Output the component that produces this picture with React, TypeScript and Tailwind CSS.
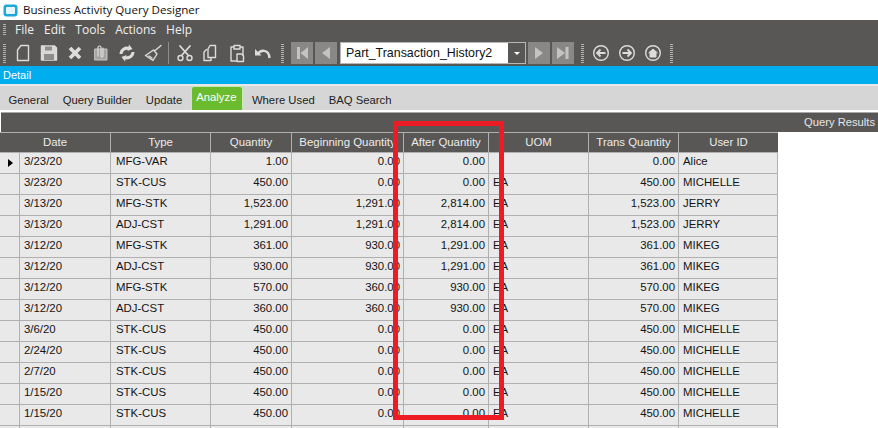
import { ReactNode } from 'react';

const menus = ['File', 'Edit', 'Tools', 'Actions', 'Help'];
const tabs = ['General', 'Query Builder', 'Update', 'Analyze', 'Where Used', 'BAQ Search'];

const rows = [
  ['3/23/20', 'MFG-VAR', '1.00', '0.00', '0.00', '', '0.00', 'Alice'],
  ['3/23/20', 'STK-CUS', '450.00', '0.00', '0.00', 'EA', '450.00', 'MICHELLE'],
  ['3/13/20', 'MFG-STK', '1,523.00', '1,291.00', '2,814.00', 'EA', '1,523.00', 'JERRY'],
  ['3/13/20', 'ADJ-CST', '1,291.00', '1,291.00', '2,814.00', 'EA', '1,523.00', 'JERRY'],
  ['3/12/20', 'MFG-STK', '361.00', '930.00', '1,291.00', 'EA', '361.00', 'MIKEG'],
  ['3/12/20', 'ADJ-CST', '930.00', '930.00', '1,291.00', 'EA', '361.00', 'MIKEG'],
  ['3/12/20', 'MFG-STK', '570.00', '360.00', '930.00', 'EA', '570.00', 'MIKEG'],
  ['3/12/20', 'ADJ-CST', '360.00', '360.00', '930.00', 'EA', '570.00', 'MIKEG'],
  ['3/6/20', 'STK-CUS', '450.00', '0.00', '0.00', 'EA', '450.00', 'MICHELLE'],
  ['2/24/20', 'STK-CUS', '450.00', '0.00', '0.00', 'EA', '450.00', 'MICHELLE'],
  ['2/7/20', 'STK-CUS', '450.00', '0.00', '0.00', 'EA', '450.00', 'MICHELLE'],
  ['1/15/20', 'STK-CUS', '450.00', '0.00', '0.00', 'EA', '450.00', 'MICHELLE'],
  ['1/15/20', 'STK-CUS', '450.00', '0.00', '0.00', 'EA', '450.00', 'MICHELLE'],
  ['', '', '', '', '', '', '', ''],
];

const headers = ['Date', 'Type', 'Quantity', 'Beginning Quantity', 'After Quantity', 'UOM', 'Trans Quantity', 'User ID'];
const gridCols = 'grid grid-cols-[19px_91px_100px_81px_112px_85px_100px_90px_100px] w-[778px]';

function Grip({ tall }: { tall?: boolean }) {
  return (
    <div className={`w-[3px] ${tall ? 'h-[19px]' : 'h-[12px]'} shrink-0 bg-[repeating-linear-gradient(to_bottom,#b5b3b1_0,#b5b3b1_1px,transparent_1px,transparent_2px)]`} />
  );
}

function Glyph({ children }: { children: ReactNode }) {
  return (
    <svg width="20" height="20" viewBox="0 0 20 20" fill="none" stroke="#dcdcdc" strokeWidth="1.4" strokeLinejoin="round" strokeLinecap="round" className="shrink-0">
      {children}
    </svg>
  );
}

function NavBtn({ children }: { children: ReactNode }) {
  return (
    <div className="w-[22px] h-[22px] shrink-0 bg-[#8a8887] flex items-center justify-center">
      <svg width="14" height="14" viewBox="0 0 14 14" fill="#c4c3c2">{children}</svg>
    </div>
  );
}

function RoundIcon({ children }: { children: ReactNode }) {
  return (
    <svg width="18" height="18" viewBox="0 0 18 18" fill="none" stroke="#dcdcdc" strokeWidth="1.4" className="shrink-0">
      <circle cx="9" cy="9" r="7.3" />
      {children}
    </svg>
  );
}

export default function App() {
  return (
    <div className="w-[878px] h-[428px] overflow-hidden bg-white relative font-['Liberation_Sans',Arial,sans-serif]">
      <div className="h-5 flex items-center pl-[3px] gap-[5px] bg-white">
        <svg width="15" height="13" viewBox="0 0 15 13">
          <rect x="0.5" y="0.5" width="14" height="12" rx="3" fill="#1fa7dc" />
          <rect x="3" y="3" width="9" height="7" rx="1" fill="#e6f6fc" />
        </svg>
        <span className="text-[11.6px] text-[#111] font-['Open_Sans',sans-serif]">Business Activity Query Designer</span>
      </div>

      <div className="h-[46px] bg-[#595755] flex flex-col">
        <div className="h-[20px] flex items-center pl-[3px]">
          <Grip />
          <div className="flex gap-[10px] ml-[9px] text-[12px] text-[#f0f0f0] font-['Open_Sans',sans-serif]">
            {menus.map((m) => <span key={m}>{m}</span>)}
          </div>
        </div>
        <div className="h-[26px] flex items-center pl-[3px]">
          <Grip tall />
          <div className="flex items-center gap-[6px] ml-[7px]">
            <Glyph><path d="M8 2.5h7.5v15h-11V7z" /></Glyph>
            <Glyph><path d="M2.5 3h13l2 2v12h-15z" fill="#d8d8d8" /><path d="M6 3.5h7v4H6z M5 11h10v6H5z" fill="#8f8d8b" stroke="none" /></Glyph>
            <Glyph><path d="M5 5l10 10M15 5L5 15" strokeWidth="3.8" strokeLinecap="butt" /></Glyph>
            <Glyph><path d="M4 6h12v11H4z" fill="#a5a3a1" stroke="#c8c8c8" strokeWidth="1" /><path d="M7 13V4.5a1.5 1.5 0 0 1 3 0V13a1 1 0 0 0 2 0V5" strokeWidth="1.2" /></Glyph>
            <Glyph><path d="M4 11a6 6 0 0 1 8-5.5M16 9a6 6 0 0 1-8 5.5" strokeWidth="3" strokeLinecap="butt" /><path d="M12 1.5l3.5 4.5-5 2z M8 18.5l-3.5-4.5 5-2z" fill="#dcdcdc" stroke="none" /></Glyph>
            <Glyph><path d="M18 2.5l-6.5 5.5M10.5 7l3.5 4-4 6.5-7.5-5z M6 13l3 2" /></Glyph>
          </div>
          <div className="w-px h-[22px] bg-[#8f8d8b] ml-[5px]" />
          <div className="flex items-center gap-[6px] ml-[6px]">
            <Glyph><path d="M5 3l8 9M15 3l-8 9" strokeWidth="1.8" /><circle cx="5.5" cy="15" r="2.5" /><circle cx="14.5" cy="15" r="2.5" /></Glyph>
            <Glyph><path d="M9 2.5h5.5v12H7V6z M5.5 6.5L3 9v8.5h7v-3" /></Glyph>
            <Glyph><path d="M7 4H4v14h12V4h-3 M7 2.5h6V6H7z" /><path d="M10 11h4.5l2 2v5.5H10z" fill="#595755" /></Glyph>
            <Glyph><path d="M5 11a6 6 0 0 1 11 1l.5 3" strokeWidth="2.4" strokeLinecap="butt" /><path d="M2 6l6.5 6.5H2z" fill="#dcdcdc" stroke="none" /></Glyph>
          </div>
          <div className="ml-[8px]"><Grip tall /></div>
          <div className="flex items-center gap-[2px] ml-[7px]">
            <NavBtn><path d="M2 1h3v12H2z M13 1v12L5.5 7z" /></NavBtn>
            <NavBtn><path d="M11 1v12L3 7z" /></NavBtn>
          </div>
          <div className="ml-[3px] w-[186px] h-[22px] shrink-0 border border-[#b8b7b6] bg-white flex items-center">
            <span className="flex-1 pl-[5px] text-[12.4px] text-[#111]">Part_Transaction_History2</span>
            <div className="w-[17px] h-full bg-[#595755] flex items-center justify-center">
              <div className="w-0 h-0 border-x-[3px] border-t-[3px] border-x-transparent border-t-white" />
            </div>
          </div>
          <div className="flex items-center gap-[2px] ml-[2px]">
            <NavBtn><path d="M3 1v12l8-6z" /></NavBtn>
            <NavBtn><path d="M1 1v12l8-6z M9.5 1h3v12h-3z" /></NavBtn>
          </div>
          <div className="ml-[7px]"><Grip tall /></div>
          <div className="flex items-center gap-[8px] ml-[8px]">
            <RoundIcon><path d="M13.5 9H5.5M8.5 5.5L5 9l3.5 3.5" strokeWidth="1.8" /></RoundIcon>
            <RoundIcon><path d="M4.5 9h8M9.5 5.5L13 9l-3.5 3.5" strokeWidth="1.8" /></RoundIcon>
            <RoundIcon><path d="M4.5 9L9 5l4.5 4M6 8.5V13h6V8.5z" fill="#dcdcdc" strokeWidth="1" /></RoundIcon>
          </div>
          <div className="ml-[8px]"><Grip tall /></div>
        </div>
      </div>

      <div className="h-[18px] bg-[#00adef] flex items-center pl-[3px] text-[11px] text-white">Detail</div>

      <div className="h-[26px] bg-[#d6d6d6] border-t-2 border-[#e8e8e8] flex items-end pl-[1.5px]">
        <div className="flex items-center text-[11.3px] text-[#222] h-[24px]">
          {tabs.map((t) =>
            t === 'Analyze' ? (
              <div key={t} className="h-[24px] ml-[2px] mr-[1.5px] pl-[4px] pr-[6px] bg-[#6abc2e] border border-b-0 border-[#c9e8b2] rounded-t-[3px] text-white flex items-center pb-[2px]">{t}</div>
            ) : (
              <div key={t} className="px-[7px] pt-[5px] flex items-center">{t}</div>
            )
          )}
        </div>
      </div>

      <div className="h-[2px] bg-white" />

      <div className="h-[20px] bg-[#595755] border-t border-[#a8a8a8] ml-px flex items-center justify-end pr-[3px] text-[11.2px] text-[#e6e6e6]">Query Results</div>

      <div className={gridCols}>
        {headers.map((h, i) => (
          <div key={h} className={`h-5 bg-[#595755] border-t border-[#b0b0b0] text-[11.4px] text-[#ececec] pt-[1px] flex items-center justify-center overflow-hidden whitespace-nowrap ${i === 0 ? 'col-span-2' : 'border-l'}`}>
            {h}
          </div>
        ))}
        {rows.map((r, i) => (
          <div key={i} className="contents">
            <div className="h-[21px] bg-[#e9e9e9] border-t border-[#b0b0b0] flex items-center pl-[8px]">
              {i === 0 && <div className="w-0 h-0 border-y-[4.5px] border-l-[5px] border-y-transparent border-l-black" />}
            </div>
            {r.map((c, j) => {
              const numeric = j >= 2 && j <= 4 || j === 6;
              return (
                <div key={j} className={`h-[21px] bg-[#e9e9e9] border-t border-l border-[#b0b0b0] text-[11.4px] text-[#141414] pb-[2px] flex items-center whitespace-nowrap overflow-hidden ${numeric ? 'justify-end pr-[3px]' : j === 1 ? 'pl-[5px]' : 'pl-[4px]'} ${j === 7 ? 'border-r' : ''}`}>
                  {c}
                </div>
              );
            })}
          </div>
        ))}
      </div>

      {/* red highlight drawn over the screenshot */}
      <div className="absolute left-[393px] top-[121px] w-[111px] h-[299px] border-[5px] border-[#ed1c24]" />
    </div>
  );
}
